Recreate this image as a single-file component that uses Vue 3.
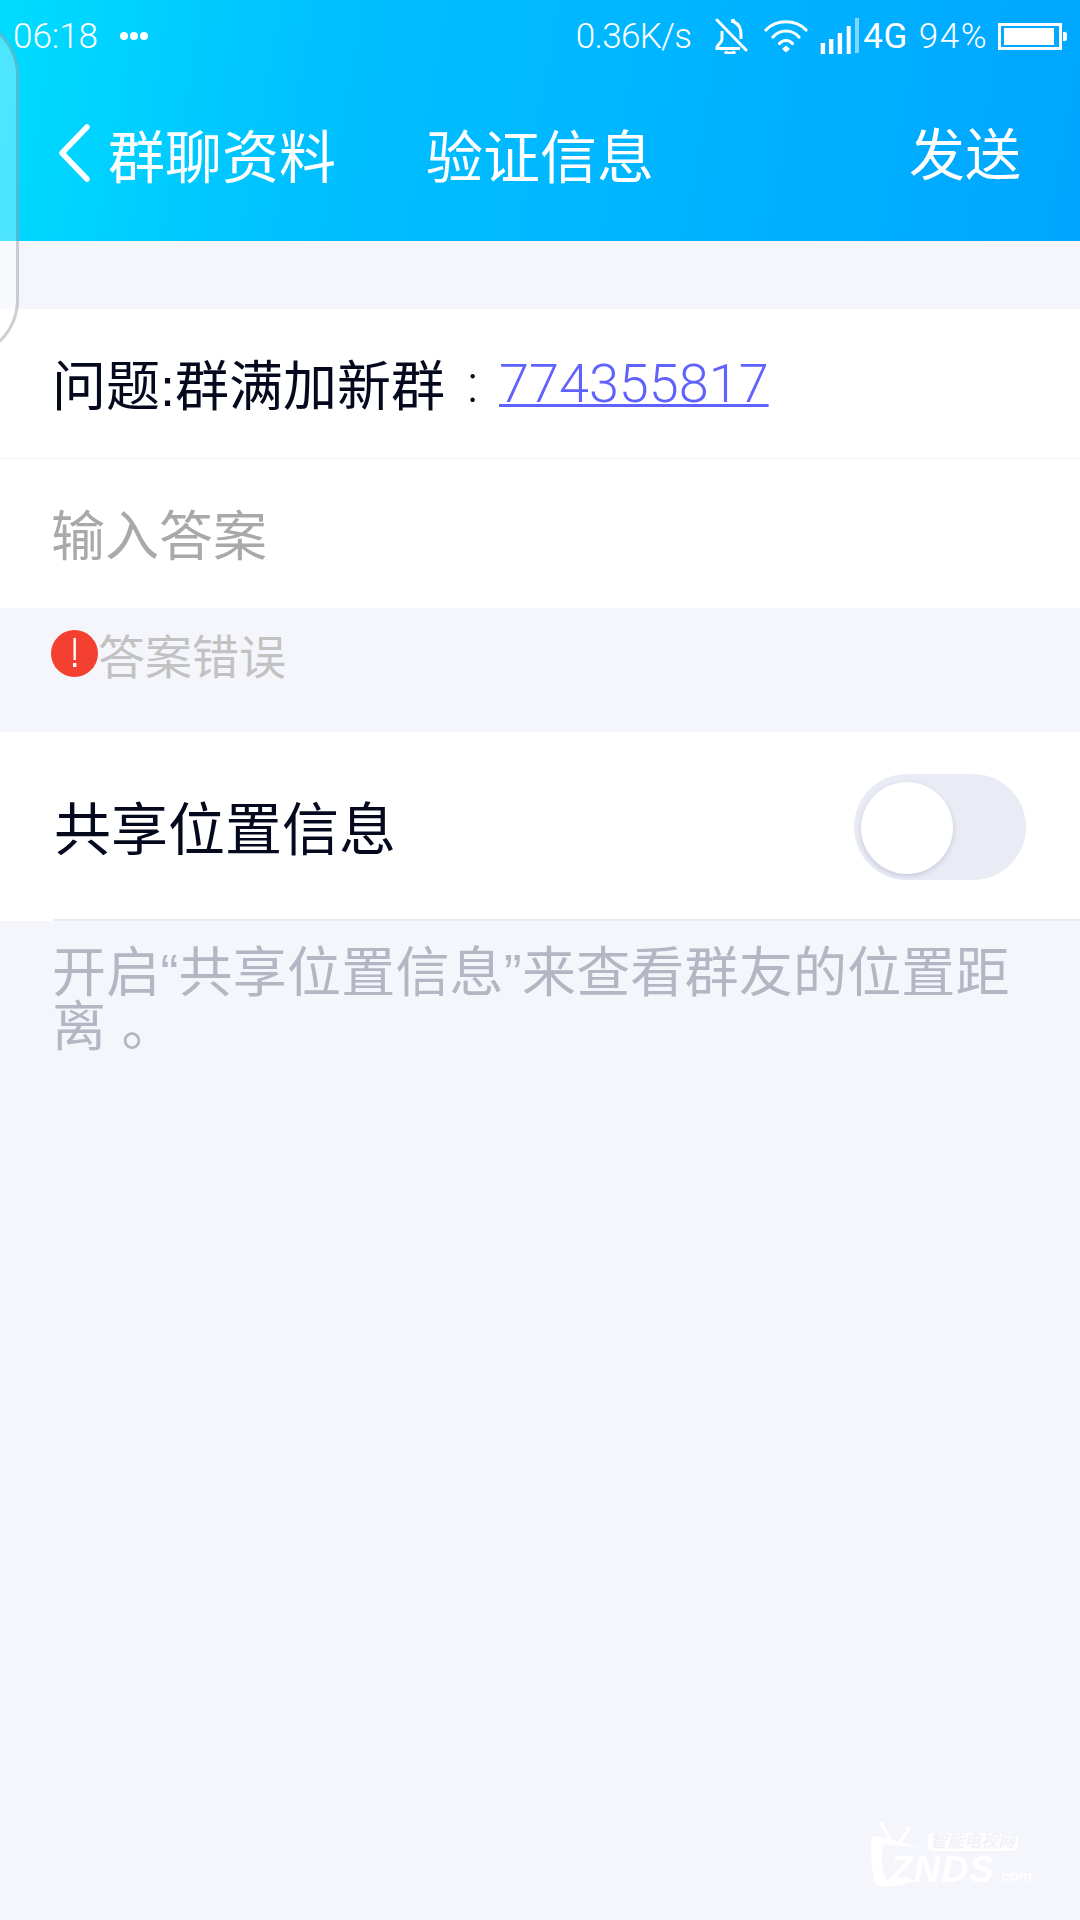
<script setup>
const digits = '774355817'
</script>

<template>
  <div class="page">
    <header class="header">
      <div class="status">
        <span class="time">06:18</span>
        <span class="dots"><i></i><i></i><i></i></span>
        <span class="spacer"></span>
        <span class="speed">0.36K/s</span>
        <svg class="bell" width="36" height="36" viewBox="0 0 36 36" fill="none" stroke="#fff" stroke-width="3">
          <path d="M4 2 L33 32" stroke-linecap="round" />
          <circle cx="20" cy="3" r="2.2" fill="#fff" stroke="none" />
          <path d="M21 4 C26 6 28 11 28 17 L28 21" />
          <path d="M9 13 L9 21 C9 25 5 26 4 29 L4 30.5 L27 30.5" />
          <path d="M12 33.5 C14 36 20 36 22 33.5" stroke-width="3.4" />
        </svg>
        <svg class="wifi" width="44" height="34" viewBox="0 0 44 34" fill="none" stroke="#fff" stroke-width="3.2" stroke-linecap="round">
          <path d="M2 11 C12 0 32 0 42 11" />
          <path d="M9 18 C16 10 28 10 35 18" />
          <path d="M15.5 24.5 C19 20.5 25 20.5 28.5 24.5" />
          <path d="M22 26.5 L26 30 L22 33.5 L18 30 Z" fill="#fff" stroke="none" />
        </svg>
        <svg class="signal" width="39" height="36" viewBox="0 0 39 36" fill="#fff">
          <rect x="0.7" y="25" width="4.4" height="11" />
          <rect x="9" y="21" width="4.4" height="15" />
          <rect x="17.7" y="15" width="4.4" height="21" />
          <rect x="26.7" y="8" width="4" height="28" />
          <rect x="35" y="0" width="4" height="35" opacity=".5" />
        </svg>
        <span class="net">4G</span>
        <span class="pct">94%</span>
        <span class="battery"><span class="fill"></span></span>
        <span class="nub"></span>
      </div>
      <div class="nav">
        <div class="back">
          <svg width="31" height="58" viewBox="0 0 31 58" fill="none" stroke="#fff" stroke-width="5.5" stroke-linecap="round" stroke-linejoin="round">
            <path d="M28 3 L3 29 L28 55" />
          </svg>
          <span>群聊资料</span>
        </div>
        <div class="title">验证信息</div>
        <div class="send">发送</div>
      </div>
    </header>

    <section class="card first">
      <div class="row question">
        <span class="q-text">问题:群满加新群</span><span class="sep">:</span><a class="link">{{ digits }}</a>
      </div>
      <div class="row placeholder">输入答案</div>
    </section>

    <div class="error">
      <svg width="47" height="47" viewBox="0 0 47 47">
        <circle cx="23.5" cy="23.5" r="23.5" fill="#f44030" />
        <rect x="22.5" y="8" width="2.4" height="22" fill="#fff" />
        <rect x="22" y="33" width="3.4" height="4" fill="#fff" />
      </svg>
      <span>答案错误</span>
    </div>

    <section class="card share">
      <span class="share-label">共享位置信息</span>
      <span class="toggle"><span class="knob"></span></span>
    </section>

    <p class="note">开启“共享位置信息”来查看群友的位置距离 。</p>

    <div class="float-tab"></div>

    <div class="mark">
      <svg class="mark-tv" width="70" height="66" viewBox="0 0 70 66" fill="none" stroke="#fff">
        <path d="M12 3 L22 20 M38 8 L30 20" stroke-width="3" stroke-linecap="round" />
        <circle cx="12" cy="2.5" r="2.5" fill="#fff" stroke="none" />
        <circle cx="38" cy="7" r="2.5" fill="#fff" stroke="none" />
        <path d="M2 14 C18 16 36 21 50 26 L14 22 C10 32 12 48 16 58 L46 58 C32 64 16 66 6 63 C1 46 0 28 2 14 Z" fill="#fff" stroke="none" />
      </svg>
      <span class="mark-bubble"></span>
      <span class="mark-cn">智能电视网</span>
      <span class="mark-en">ZNDS</span>
      <span class="mark-com">.com</span>
    </div>
  </div>
</template>

<style>
html, body { margin: 0; background: #f4f6fb; }
</style>

<style scoped>
.page {
  position: relative;
  width: 1080px;
  height: 1920px;
  overflow: hidden;
  background: #f4f6fb;
  font-family: "Liberation Sans", "Noto Sans CJK SC", sans-serif;
}
.header {
  height: 241px;
  background: linear-gradient(100deg, #00dcff 0%, #00c0ff 30%, #00a6ff 100%);
  color: #fff;
  overflow: hidden;
}
.status {
  height: 72px;
  display: flex;
  align-items: center;
  padding: 0 13px 0 13px;
  font-size: 35px;
  font-family: "Roboto", "Liberation Sans", sans-serif;
  font-weight: 300;
}
.dots { display: flex; gap: 2px; margin-left: 22px; }
.dots i { width: 8px; height: 8px; border-radius: 50%; background: #fff; }
.spacer { flex: 1; }
.speed { letter-spacing: -.7px; }
.bell { margin-left: 22px; }
.wifi { margin-left: 15px; }
.signal { margin-left: 12px; }
.net { margin-left: 4px; font-weight: 400; letter-spacing: .5px; }
.pct { margin-left: 11px; letter-spacing: 1.5px; }
.battery {
  margin-left: 10px;
  box-sizing: border-box;
  width: 64px;
  height: 27px;
  border: 3px solid #fff;
  padding: 2px 5px 2px 3px;
  display: flex;
}
.fill { flex: 1; background: #fff; }
.nub { width: 4px; height: 9px; background: #fff; margin-left: 1px; border-radius: 0 2px 2px 0; }
.nav {
  height: 169px;
  display: flex;
  align-items: center;
  padding: 0 59px 0 58px;
  font-size: 57px;
}
.back { display: flex; align-items: center; gap: 18px; margin-top: -7px; }
.back svg { margin-left: 1px; }
.title { margin-top: -7px; margin-left: 90px; }
.send { margin-top: -13px; margin-left: auto; font-size: 56px; }
.card { background: #fff; }
.first { margin-top: 68px; }
.row {
  height: 150px;
  display: flex;
  align-items: center;
  padding-left: 52px;
  font-size: 54px;
  box-sizing: border-box;
}
.question {
  color: #05091d;
  border-bottom: 1px solid #f2f3f7;
}
.q-text { margin-top: -2px; }
.sep {
  width: 54px;
  padding-left: 22px;
  box-sizing: border-box;
  color: #05091d;
  font-family: "Roboto", sans-serif;
  font-weight: 300;
}
.link {
  color: #6062fd;
  text-decoration: underline;
  text-decoration-thickness: 3px;
  font-family: "Roboto", sans-serif;
  font-weight: 300;
  font-size: 54px;
}
.placeholder { height: 149px; color: #a9a9a9; font-size: 54px; padding: 0 0 2px 51px; }
.error {
  height: 124px;
  box-sizing: border-box;
  display: flex;
  align-items: center;
  padding: 0 0 0 51px;
  color: #c2c2c2;
  font-size: 47px;
}
.error svg { margin-top: -34px; }
.error span { margin-top: -34px; }
.share {
  position: relative;
  height: 189px;
  display: flex;
  align-items: center;
  justify-content: space-between;
  padding: 0 54px 0 54px;
  box-sizing: border-box;
  font-size: 57px;
  color: #05091d;
}
.share-label { margin-top: -3px; }
.share::after {
  content: "";
  position: absolute;
  left: 54px;
  right: 0;
  bottom: 0;
  height: 2px;
  background: #e8ebf2;
}
.toggle {
  position: relative;
  width: 172px;
  height: 106px;
  border-radius: 53px;
  background: #e9ecf5;
}
.knob {
  position: absolute;
  left: 7px;
  top: 8px;
  width: 92px;
  height: 92px;
  border-radius: 50%;
  background: #fff;
  box-shadow: 0 2px 5px rgba(90, 95, 130, .25);
}
.note {
  margin: 25px 0 0;
  padding: 0 50px 0 52px;
  font-size: 54px;
  line-height: 54px;
  letter-spacing: .2px;
  color: #b4b6c3;
}
.float-tab {
  position: absolute;
  left: -100px;
  top: 17px;
  width: 119px;
  height: 341px;
  box-sizing: border-box;
  border: 3px solid rgba(90, 100, 110, .3);
  border-radius: 58px;
  background: rgba(255, 255, 255, .3);
}
.mark {
  position: absolute;
  left: 870px;
  top: 1822px;
  width: 170px;
  height: 68px;
  color: #fff;
  font-weight: 700;
  font-style: italic;
}
.mark-tv { position: absolute; left: 0; top: 0; }
.mark-bubble {
  position: absolute;
  left: 58px;
  top: 11px;
  width: 90px;
  height: 18px;
  border-radius: 5px;
  background: #fff;
}
.mark-cn {
  position: absolute;
  left: 60px;
  top: 9px;
  font-size: 17px;
  line-height: 22px;
  white-space: nowrap;
  color: #f1f3f8;
}
.mark-en {
  position: absolute;
  left: 20px;
  top: 30px;
  font-size: 37px;
  line-height: 36px;
  letter-spacing: 1px;
}
.mark-com {
  position: absolute;
  left: 127px;
  top: 46px;
  font-size: 15px;
  line-height: 16px;
}
</style>
